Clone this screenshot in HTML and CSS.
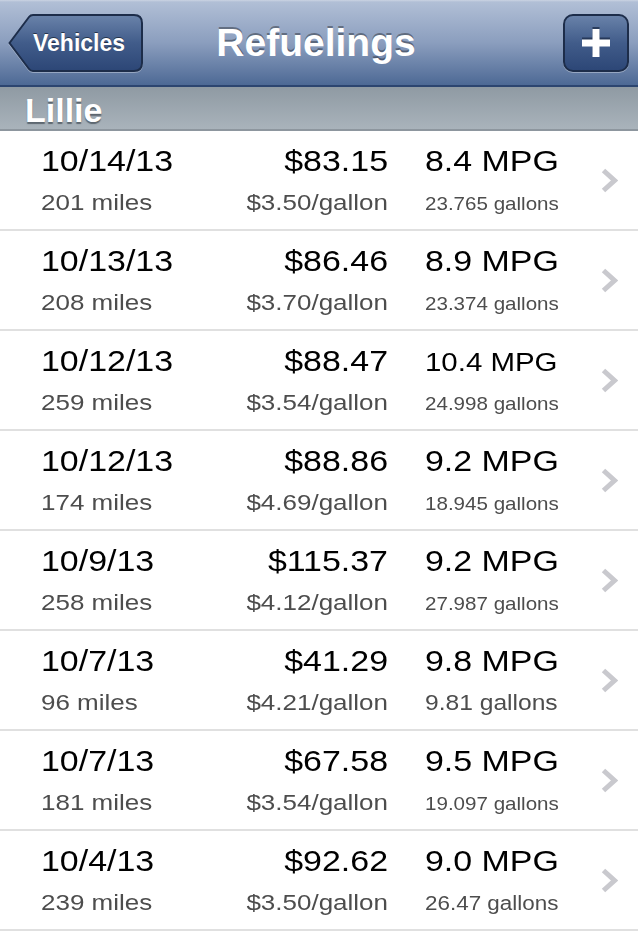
FILE: index.html
```html
<!DOCTYPE html>
<html lang="en">
<head>
    <meta charset="UTF-8">
    <title>Refuelings</title>
    <meta name="viewport" content="width=device-width, initial-scale=1.0">
    <link rel="stylesheet" href="styles.css">
</head>
<body>
    <header class="navbar">
        <a class="back" href="#">
            <svg class="btn-shape" width="136" height="60" viewBox="0 0 136 60">
                <defs>
                    <linearGradient id="btnFill" x1="0" y1="0" x2="0" y2="1">
                        <stop offset="0" stop-color="#6a83aa"/>
                        <stop offset="0.5" stop-color="#415c8a"/>
                        <stop offset="1" stop-color="#2c4676"/>
                    </linearGradient>
                </defs>
                <path d="M1.5 30 L21 4 Q22.5 2 25 2 H126 Q134 2 134 10 V50 Q134 58 126 58 H25 Q22.5 58 21 56 Z" fill="url(#btnFill)" stroke="#1d2d4a" stroke-width="2"/>
            </svg>
            <span class="back-label">Vehicles</span>
        </a>
        <h1 class="title">Refuelings</h1>
        <a class="add" href="#">
            <svg class="btn-shape" width="66" height="60" viewBox="0 0 66 60">
                <defs>
                    <linearGradient id="addFill" x1="0" y1="0" x2="0" y2="1">
                        <stop offset="0" stop-color="#6a83aa"/>
                        <stop offset="0.5" stop-color="#415c8a"/>
                        <stop offset="1" stop-color="#2c4676"/>
                    </linearGradient>
                </defs>
                <rect x="1" y="2" width="64" height="56" rx="9" fill="url(#addFill)" stroke="#1d2d4a" stroke-width="2"/>
                <!-- plus sign with its dark shadow above -->
                <path d="M29.5 14 h7 v10.5 h10.5 v7 h-10.5 v10.5 h-7 v-10.5 h-10.5 v-7 h10.5 z" fill="#1b2b47" opacity="0.75"/>
                <path d="M29.5 16 h7 v10.5 h10.5 v7 h-10.5 v10.5 h-7 v-10.5 h-10.5 v-7 h10.5 z" fill="#ffffff"/>
            </svg>
        </a>
    </header>

    <div class="section-head">Lillie</div>

    <div class="list">
        <div class="row">
            <div class="cols">
                <div class="line main"><span class="c1">10/14/13</span><span class="c2">$83.15</span><span class="c3">8.4 MPG</span></div>
                <div class="line sub"><span class="c1">201 miles</span><span class="c2">$3.50/gallon</span><span class="c3 g6">23.765 gallons</span></div>
            </div>
            <svg class="chev" width="17" height="25" viewBox="0 0 17 25"><path d="M2.5 2.5 L13.5 12.5 L2.5 22.5" /></svg>
        </div>
        <div class="row">
            <div class="cols">
                <div class="line main"><span class="c1">10/13/13</span><span class="c2">$86.46</span><span class="c3">8.9 MPG</span></div>
                <div class="line sub"><span class="c1">208 miles</span><span class="c2">$3.70/gallon</span><span class="c3 g6">23.374 gallons</span></div>
            </div>
            <svg class="chev" width="17" height="25" viewBox="0 0 17 25"><path d="M2.5 2.5 L13.5 12.5 L2.5 22.5" /></svg>
        </div>
        <div class="row">
            <div class="cols">
                <div class="line main"><span class="c1">10/12/13</span><span class="c2">$88.47</span><span class="c3 m8">10.4 MPG</span></div>
                <div class="line sub"><span class="c1">259 miles</span><span class="c2">$3.54/gallon</span><span class="c3 g6">24.998 gallons</span></div>
            </div>
            <svg class="chev" width="17" height="25" viewBox="0 0 17 25"><path d="M2.5 2.5 L13.5 12.5 L2.5 22.5" /></svg>
        </div>
        <div class="row">
            <div class="cols">
                <div class="line main"><span class="c1">10/12/13</span><span class="c2">$88.86</span><span class="c3">9.2 MPG</span></div>
                <div class="line sub"><span class="c1">174 miles</span><span class="c2">$4.69/gallon</span><span class="c3 g6">18.945 gallons</span></div>
            </div>
            <svg class="chev" width="17" height="25" viewBox="0 0 17 25"><path d="M2.5 2.5 L13.5 12.5 L2.5 22.5" /></svg>
        </div>
        <div class="row">
            <div class="cols">
                <div class="line main"><span class="c1">10/9/13</span><span class="c2">$115.37</span><span class="c3">9.2 MPG</span></div>
                <div class="line sub"><span class="c1">258 miles</span><span class="c2">$4.12/gallon</span><span class="c3 g6">27.987 gallons</span></div>
            </div>
            <svg class="chev" width="17" height="25" viewBox="0 0 17 25"><path d="M2.5 2.5 L13.5 12.5 L2.5 22.5" /></svg>
        </div>
        <div class="row">
            <div class="cols">
                <div class="line main"><span class="c1">10/7/13</span><span class="c2">$41.29</span><span class="c3">9.8 MPG</span></div>
                <div class="line sub"><span class="c1">96 miles</span><span class="c2">$4.21/gallon</span><span class="c3 g4">9.81 gallons</span></div>
            </div>
            <svg class="chev" width="17" height="25" viewBox="0 0 17 25"><path d="M2.5 2.5 L13.5 12.5 L2.5 22.5" /></svg>
        </div>
        <div class="row">
            <div class="cols">
                <div class="line main"><span class="c1">10/7/13</span><span class="c2">$67.58</span><span class="c3">9.5 MPG</span></div>
                <div class="line sub"><span class="c1">181 miles</span><span class="c2">$3.54/gallon</span><span class="c3 g6">19.097 gallons</span></div>
            </div>
            <svg class="chev" width="17" height="25" viewBox="0 0 17 25"><path d="M2.5 2.5 L13.5 12.5 L2.5 22.5" /></svg>
        </div>
        <div class="row">
            <div class="cols">
                <div class="line main"><span class="c1">10/4/13</span><span class="c2">$92.62</span><span class="c3">9.0 MPG</span></div>
                <div class="line sub"><span class="c1">239 miles</span><span class="c2">$3.50/gallon</span><span class="c3 g5">26.47 gallons</span></div>
            </div>
            <svg class="chev" width="17" height="25" viewBox="0 0 17 25"><path d="M2.5 2.5 L13.5 12.5 L2.5 22.5" /></svg>
        </div>
    </div>
</body>
</html>
```

FILE: styles.css
```css
body {
    margin: 0;
    background: #ffffff;
    font-family: "Liberation Sans", Arial, sans-serif;
    color: #000000;
}

/* top bar */
.navbar {
    display: grid;
    grid-template-columns: 1fr auto 1fr;
    align-items: center;
    height: 85px;
    padding: 0 9px 0 8px;
    background: linear-gradient(#cbd4e3 0, #b1bfd6 2px, #8b9ebe 50%, #4d6995 100%);
    border-bottom: 2px solid #2c4570;
}
.back, .add {
    position: relative;
    display: flex;
    align-items: center;
    height: 60px;
    text-decoration: none;
}
.back {
    justify-self: start;
    width: 136px;
}
.add {
    justify-self: end;
    width: 66px;
}
.btn-shape {
    position: absolute;
    left: 0;
    top: 0;
    filter: drop-shadow(0 1px 0 rgba(255, 255, 255, 0.35));
}
.back-label {
    position: relative;
    padding-left: 25px;
    font-size: 23px;
    font-weight: bold;
    line-height: 30px;
    color: #ffffff;
    text-shadow: 0 -1px 0 rgba(0, 0, 0, 0.5);
}
.title {
    margin: 0 5px 0 0;
    font-size: 39px;
    line-height: 40px;
    font-weight: bold;
    color: #ffffff;
    text-shadow: 0 -2px 0 rgba(0, 0, 0, 0.35);
}

/* section header */
.section-head {
    height: 39px;
    padding: 3px 0 0 25px;
    font-size: 34px;
    line-height: 40px;
    font-weight: bold;
    color: #ffffff;
    text-shadow: 0 2px 1px rgba(45, 55, 65, 0.6);
    background: linear-gradient(#8f9aa3, #a9b3bb);
    border-bottom: 2px solid #8d969e;
}

/* rows */
.row {
    display: flex;
    align-items: flex-start;
    height: 98px;
    padding-left: 41px;
    border-bottom: 2px solid #e0e0e0;
}
.cols {
    padding-top: 10px;
}
.line {
    display: flex;
    align-items: baseline;
    height: 40px;
    line-height: 40px;
    white-space: nowrap;
}
.line.main {
    font-size: 29.5px;
    color: #000000;
}
.line.sub {
    margin-top: 2px;
    font-size: 22.6px;
    color: #4d4d4d;
}
/* the cell text is drawn a little wider than the font */
.c1, .c2, .c3 {
    transform: scaleX(1.15);
}
.c1 {
    width: 150px;
    transform-origin: left center;
}
.c2 {
    width: 197px;
    text-align: right;
    transform-origin: right center;
}
.c3 {
    width: 133px;
    margin-left: 37px;
    transform-origin: left center;
}
/* shrunk to fit the column */
.c3.m8 { font-size: 25.6px; }
.c3.g6 { font-size: 17.9px; }
.c3.g5 { font-size: 19.5px; }
.c3.g4 { font-size: 21.4px; }

.chev {
    align-self: center;
    margin-left: 43px;
    fill: none;
    stroke: #c9c9ce;
    stroke-width: 5;
}
```
